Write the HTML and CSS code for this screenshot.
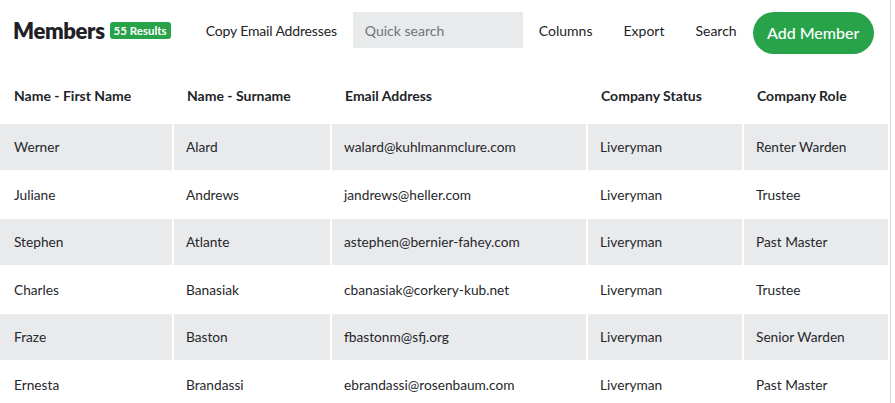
FILE: index.html
```html
<!DOCTYPE html>
<html lang="en">
<head>
<meta charset="utf-8">
<title>Members</title>
<link rel="stylesheet" href="styles.css">
</head>
<body>
<div class="page">
  <header class="toolbar">
    <div class="title-group">
      <h1 class="title">Members</h1>
      <span class="badge">55 Results</span>
    </div>
    <a class="tool-link copy" href="#">Copy Email Addresses</a>
    <input class="quick-search" type="text" placeholder="Quick search">
    <a class="tool-link" href="#">Columns</a>
    <a class="tool-link" href="#">Export</a>
    <a class="tool-link" href="#">Search</a>
    <button class="btn-add" type="button">Add Member</button>
  </header>
  <table class="members">
    <colgroup>
      <col class="c1"><col class="c2"><col class="c3"><col class="c4"><col class="c5">
    </colgroup>
    <thead>
      <tr>
        <th>Name - First Name</th>
        <th>Name - Surname</th>
        <th>Email Address</th>
        <th>Company Status</th>
        <th>Company Role</th>
      </tr>
    </thead>
    <tbody>
      <tr><td>Werner</td><td>Alard</td><td>walard@kuhlmanmclure.com</td><td>Liveryman</td><td>Renter Warden</td></tr>
      <tr><td>Juliane</td><td>Andrews</td><td>jandrews@heller.com</td><td>Liveryman</td><td>Trustee</td></tr>
      <tr><td>Stephen</td><td>Atlante</td><td>astephen@bernier-fahey.com</td><td>Liveryman</td><td>Past Master</td></tr>
      <tr><td>Charles</td><td>Banasiak</td><td>cbanasiak@corkery-kub.net</td><td>Liveryman</td><td>Trustee</td></tr>
      <tr><td>Fraze</td><td>Baston</td><td>fbastonm@sfj.org</td><td>Liveryman</td><td>Senior Warden</td></tr>
      <tr><td>Ernesta</td><td>Brandassi</td><td>ebrandassi@rosenbaum.com</td><td>Liveryman</td><td>Past Master</td></tr>
    </tbody>
  </table>
</div>
</body>
</html>
```
FILE: styles.css
```css
* { box-sizing: border-box; }

html, body {
  margin: 0;
  padding: 0;
  background: #fff;
  overflow: hidden;
}

body {
  font-family: Lato, "Open Sans", "Liberation Sans", sans-serif;
  color: #222428;
}

.page {
  width: 891px;
  min-height: 403px;
  border-right: 1px solid #d6d6d6;
}

.toolbar {
  display: flex;
  align-items: center;
  height: 60px;
  padding: 0 0 0 13px;
}

.title-group {
  display: flex;
  align-items: center;
  gap: 5px;
}

.title {
  margin: 0;
  font-size: 22px;
  font-weight: 800;
  letter-spacing: -0.35px;
  color: #1f2126;
}

.badge {
  display: inline-block;
  background: #28a34a;
  color: #fff;
  font-size: 11.5px;
  font-weight: 700;
  line-height: 17px;
  padding: 0 4px;
  border-radius: 3px;
  margin-top: 1px;
}

.tool-link {
  font-size: 14px;
  color: #222428;
  text-decoration: none;
}

.copy {
  margin-left: 35px;
  letter-spacing: -0.15px;
}

.quick-search {
  margin-left: 16px;
  width: 170px;
  height: 36px;
  border: 0;
  background: #e9eaec;
  font-family: inherit;
  font-size: 14px;
  padding: 0 12px;
  color: #222428;
}

.quick-search::placeholder {
  color: #6f737a;
}

.quick-search + .tool-link { margin-left: 16px; }
.tool-link + .tool-link { margin-left: 31px; }

.btn-add {
  margin-left: 16px;
  margin-top: 5px;
  width: 121px;
  height: 42px;
  border: 0;
  border-radius: 21px;
  background: #28a34a;
  color: #fff;
  font-family: inherit;
  font-size: 16px;
  font-weight: 500;
  padding: 0;
}

.members {
  width: 888px;
  border-collapse: separate;
  border-spacing: 0;
  table-layout: fixed;
}

.c1 { width: 174px; }
.c2 { width: 158px; }
.c3 { width: 256px; }
.c4 { width: 156px; }
.c5 { width: 144px; }

.members th {
  text-align: left;
  font-size: 14px;
  font-weight: 700;
  height: 64px;
  padding: 6px 0 0 13px;
  vertical-align: middle;
  color: #222428;
}

.members th:first-child,
.members td:first-child { padding-left: 14px; }

.members td {
  font-size: 13.7px;
  height: 47.5px;
  padding: 0 0 0 12px;
  border-right: 2px solid #fff;
  border-bottom: 2px solid #fff;
  vertical-align: middle;
  color: #26282c;
}

.members td:last-child { border-right: 0; }

.members tbody tr:nth-child(odd) td {
  background: #e9eaec;
}
```
